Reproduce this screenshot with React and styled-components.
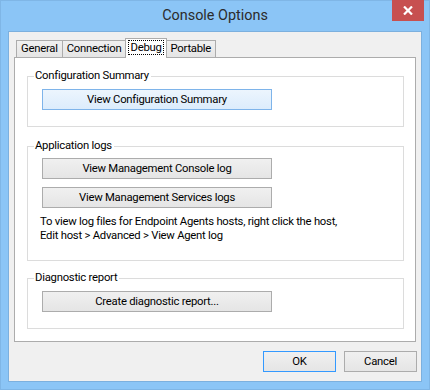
import React from "react";
import styled, { createGlobalStyle, css } from "styled-components";

const Global = createGlobalStyle`
  html, body { margin: 0; padding: 0; background: #8bc5f6; }
  * { box-sizing: border-box; }
`;

const Window = styled.div`
  width: 430px;
  height: 390px;
  background: #8bc5f6;
  border: 1px solid #7fb6e6;
  display: flex;
  flex-direction: column;
  font-family: Roboto, "Liberation Sans", sans-serif;
  font-size: 11.3px;
  letter-spacing: -0.25px;
  color: #000;
`;

const TitleBar = styled.div`
  height: 30px;
  display: flex;
  position: relative;
`;

const Title = styled.div`
  flex: 1;
  text-align: center;
  font-size: 14.4px;
  letter-spacing: 0;
  line-height: 29px;
  color: #2b2b2b;
`;

const CloseButton = styled.div`
  position: absolute;
  top: -1px;
  right: 5px;
  width: 32px;
  height: 21px;
  background: #c75050;
  display: flex;
  align-items: center;
  justify-content: center;
`;

const Client = styled.div`
  flex: 1;
  margin: 0 7px 7px 7px;
  background: #f0f0f0;
  border: 1px solid #7cb0de;
  display: flex;
  flex-direction: column;
  padding: 5px 5px 0 5px;
`;

const TabStrip = styled.div`
  display: flex;
  align-items: flex-end;
  height: 20px;
  padding-left: 3px;
  position: relative;
  z-index: 1;
`;

const Tab = styled.div`
  height: 17px;
  padding: 0 4px;
  border: 1px solid #acacac;
  border-bottom: none;
  margin-left: -1px;
  background: linear-gradient(#f0f0f0, #e5e5e5);
  line-height: 16px;
  ${(p) =>
    p.$active &&
    css`
      height: 20px;
      margin-bottom: -1px;
      background: #fff;
      line-height: 18px;
      padding: 0 3px;
    `}
`;

const Focus = styled.span`
  outline: 1px dotted #000;
  outline-offset: 0;
  padding: 0 1px;
`;

const Panel = styled.div`
  height: 285px;
  background: #fff;
  border: 1px solid #acacac;
  display: flex;
  flex-direction: column;
  padding: 10px 11px 0 12px;
`;

const Group = styled.fieldset`
  margin: ${(p) => p.$top || 0}px 0 0 0;
  border: 1px solid #dcdcdc;
  padding: ${(p) => p.$pt || 5}px 14px ${(p) => p.$pb || 16}px 14px;
  display: flex;
  flex-direction: column;
  align-items: flex-start;
  gap: 8px;
  min-width: 0;
`;

const Legend = styled.legend`
  margin-left: -8px;
  padding: 0 2px 0 1px;
  line-height: 16px;
`;

const Button = styled.button`
  font: inherit;
  letter-spacing: inherit;
  color: #000;
  height: 21px;
  width: ${(p) => p.$w || 230}px;
  border: 1px solid #acacac;
  background: linear-gradient(#f0f0f0, #e5e5e5);
  padding: 0;
  ${(p) =>
    p.$hover &&
    css`
      background: linear-gradient(#ecf5fd, #dcecfc);
      border-color: #7eb4ea;
    `}
  ${(p) =>
    p.$default &&
    css`
      border-color: #3399ff;
    `}
`;

const Note = styled.div`
  line-height: 14px;
  margin: -1px 0 0 -2px;
  white-space: nowrap;
`;

const Footer = styled.div`
  display: flex;
  justify-content: flex-end;
  gap: 8px;
  padding-top: 9px;
  margin-right: -1px;
`;

export default function App() {
  return (
    <>
      <Global />
      <Window>
        <TitleBar>
          <Title>Console Options</Title>
          <CloseButton>
            <svg width="10" height="9" viewBox="0 0 10 9">
              <path d="M1 0.5 L9 8.5 M9 0.5 L1 8.5" stroke="#fff" strokeWidth="2.2" />
            </svg>
          </CloseButton>
        </TitleBar>
        <Client>
          <TabStrip>
            <Tab>General</Tab>
            <Tab>Connection</Tab>
            <Tab $active>
              <Focus>Debug</Focus>
            </Tab>
            <Tab>Portable</Tab>
          </TabStrip>
          <Panel>
            <Group>
              <Legend>Configuration Summary</Legend>
              <Button $hover>View Configuration Summary</Button>
            </Group>
            <Group $top={11} $pt={4} $pb={17}>
              <Legend>Application logs</Legend>
              <Button>View Management Console log</Button>
              <Button>View Management Services logs</Button>
              <Note>
                To view log files for Endpoint Agents hosts, right click the host,
                <br />
                Edit host &gt; Advanced &gt; View Agent log
              </Note>
            </Group>
            <Group $top={9}>
              <Legend>Diagnostic report</Legend>
              <Button>Create diagnostic report...</Button>
            </Group>
          </Panel>
          <Footer>
            <Button $w={73} $default>OK</Button>
            <Button $w={73}>Cancel</Button>
          </Footer>
        </Client>
      </Window>
    </>
  );
}
